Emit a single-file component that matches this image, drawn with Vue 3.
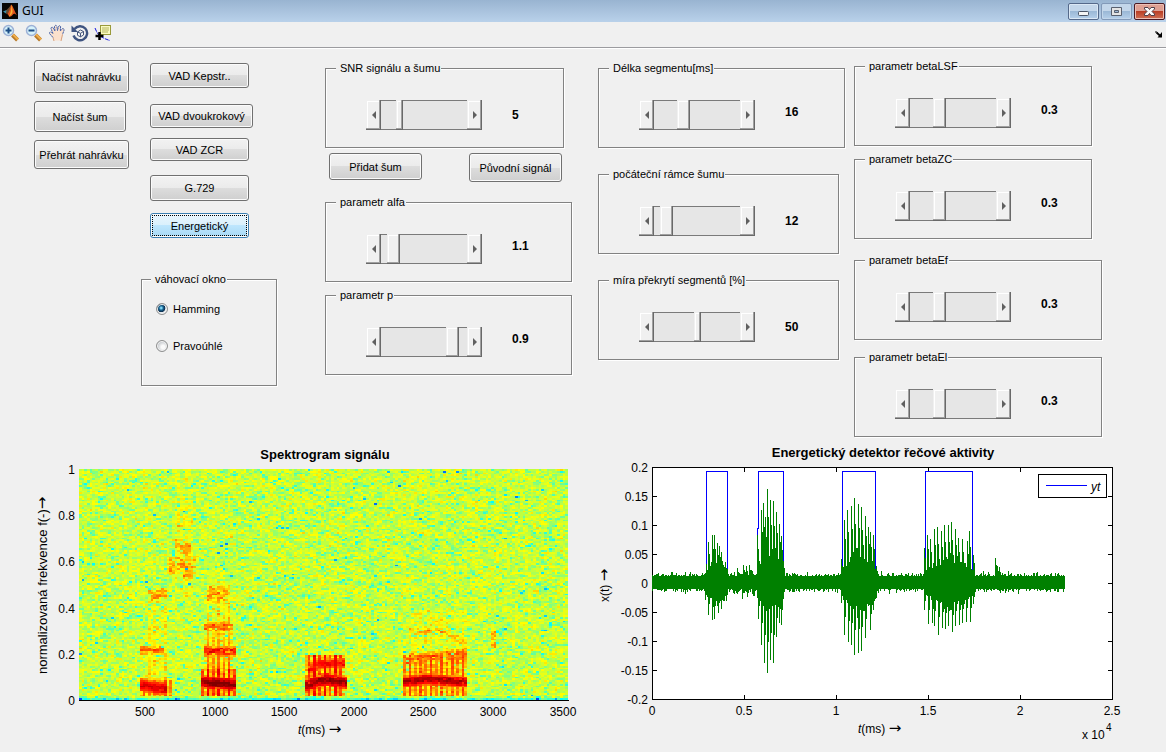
<script setup>
import { ref } from 'vue'

const loadButtons = ['Načíst nahrávku', 'Načíst šum', 'Přehrát nahrávku']
const vadButtons = ['VAD Kepstr..', 'VAD dvoukrokový', 'VAD ZCR', 'G.729', 'Energetický']
const windowKind = ref('hamming')

// pos: slider position in percent, thumb: thumb width in pixels
const columns = ref([
  {
    key: 'signal',
    panels: [
      { id: 'snr', label: 'SNR signálu a šumu', value: '5', pos: 19, thumb: 7, low: true, narrow: true, buttons: ['Přidat šum', 'Původní signál'] },
      { id: 'alfa', label: 'parametr alfa', value: '1.1', pos: 8, thumb: 13 },
      { id: 'p', label: 'parametr p', value: '0.9', pos: 89, thumb: 13 }
    ]
  },
  {
    key: 'segment',
    panels: [
      { id: 'len', label: 'Délka segmentu[ms]', value: '16', pos: 31, thumb: 13 },
      { id: 'frames', label: 'počáteční rámce šumu', value: '12', pos: 8, thumb: 13, low: true, narrow: true },
      { id: 'overlap', label: 'míra překrytí segmentů [%]', value: '50', pos: 50, thumb: 7, low: true, narrow: true }
    ]
  },
  {
    key: 'beta',
    panels: [
      { id: 'lsf', label: 'parametr betaLSF', value: '0.3', pos: 31, thumb: 13, narrow: true },
      { id: 'zc', label: 'parametr betaZC', value: '0.3', pos: 31, thumb: 13, narrow: true },
      { id: 'ef', label: 'parametr betaEf', value: '0.3', pos: 31, thumb: 13 },
      { id: 'el', label: 'parametr betaEl', value: '0.3', pos: 31, thumb: 13 }
    ]
  }
])

function makeRandom(seed) {
  let s = seed
  return () => {
    s = (s + 0x6d2b79f5) | 0
    let t = Math.imul(s ^ (s >>> 15), 1 | s)
    t = (t + Math.imul(t ^ (t >>> 7), 61 | t)) ^ t
    return ((t ^ (t >>> 14)) >>> 0) / 4294967296
  }
}

// ---- spectrogram ----
const COLS = 184
const ROWS = 128
const SX = 79
const SY = 469
const SW = 489
const SH = 231

// horizontal bands: x range, y at both ends, half height, peak level
const bands = [
  [140, 168, 685, 689, 8, 0.92], [140, 164, 650, 650, 5, 0.74], [148, 167, 597, 593, 7, 0.7], [148, 160, 627, 627, 3, 0.67],
  [168, 196, 567, 564, 9, 0.69], [174, 190, 545, 549, 7, 0.71], [182, 192, 575, 574, 7, 0.71], [178, 192, 520, 520, 7, 0.65],
  [202, 237, 682, 685, 8, 1.0], [204, 236, 651, 651, 6, 0.85], [205, 234, 627, 627, 5, 0.76], [207, 228, 595, 595, 9, 0.7],
  [305, 326, 686, 679, 8, 0.97], [326, 347, 679, 683, 8, 0.98], [307, 320, 671, 664, 7, 0.87], [320, 345, 664, 663, 6, 0.87],
  [403, 426, 682, 679, 7, 0.95], [426, 467, 679, 682, 7, 0.95], [403, 430, 660, 657, 6, 0.76], [430, 467, 657, 654, 6, 0.76],
  [408, 450, 631, 633, 4, 0.68], [450, 467, 636, 642, 5, 0.68], [491, 495, 640, 641, 10, 0.71]
]
// voiced blocks with pitch striping: x range, y range, lift
const blocks = [
  [140, 172, 680, 696, 0.18], [148, 167, 606, 680, 0.07],
  [202, 237, 670, 697, 0.24], [204, 234, 630, 670, 0.17], [207, 230, 580, 630, 0.09],
  [305, 346, 655, 696, 0.24], [403, 468, 655, 696, 0.18], [412, 466, 610, 655, 0.05],
  [176, 194, 470, 600, 0.025]
]

function jet(v) {
  const c = (d) => Math.round(255 * Math.max(0, Math.min(1, 1.5 - Math.abs(4 * v - d))))
  return `rgb(${c(3)},${c(2)},${c(1)})`
}

function buildSpectrogram() {
  const rnd = makeRandom(4711)
  const levels = new Map()
  for (let j = 0; j < ROWS; j++) {
    const y = SY + ((j + 0.5) * SH) / ROWS
    let prev = -0.5
    for (let i = 0; i < COLS; i++) {
      const x = SX + ((i + 0.5) * SW) / COLS
      const raw = Math.log(-Math.log(1 - rnd() * 0.9999) + 0.0001)
      const n = raw * 0.85 + prev * 0.15
      prev = raw
      let v = 0.588 + 0.047 * n
      const stripe = [1, 0.3, 0.75, 0.2][i % 4]
      let lift = 0
      for (const [x0, x1, y0, y1, amount] of blocks) {
        if (x < x0 || x > x1 || y < y0 || y > y1) continue
        const fade = y0 < 650 ? 0.4 + (0.6 * (y - y0)) / (y1 - y0) : 1
        lift = Math.max(lift, amount * stripe * fade + amount * 0.2)
      }
      if (lift > 0.1) v = v * 0.5 + 0.3 + lift
      else v += lift
      for (const [x0, x1, ya, yb, half, peak] of bands) {
        if (x < x0 || x > x1) continue
        const yc = ya + ((yb - ya) * (x - x0)) / (x1 - x0)
        const d = Math.abs(y - yc) / half
        if (d < 1) v = Math.max(v, peak - (peak - 0.62) * d * d + (peak > 0.85 ? 0.025 : 0.055) * (n + 0.4))
      }
      if (j === ROWS - 1) v = 0.46 + 0.06 * n
      if (j === ROWS - 2) v -= 0.02
      const q = Math.round(Math.max(0.06, Math.min(0.99, v)) * 48)
      const px0 = SX + Math.round((i * SW) / COLS)
      const px1 = SX + Math.round(((i + 1) * SW) / COLS)
      const py0 = SY + Math.round((j * SH) / ROWS)
      const py1 = SY + Math.round(((j + 1) * SH) / ROWS)
      levels.set(q, (levels.get(q) || '') + `M${px0} ${py0}H${px1}V${py1}H${px0}z`)
    }
  }
  return [...levels].map(([q, d]) => ({ q, d, fill: jet(q / 48) }))
}
const spectrogram = buildSpectrogram()
const specY = ['1', '0.8', '0.6', '0.4', '0.2', '0'].map((t, i) => ({ t, y: Math.round(474 + i * 46.2) }))
const specX = ['500', '1000', '1500', '2000', '2500', '3000', '3500'].map((t, i) => ({ t, x: Math.round(145 + i * 69.6) }))

// ---- waveform: [x, amplitude] peaks above and below the zero line ----
const ZERO = 583
const peaksUp = [
  [706, 19], [708, 41], [712, 48], [714, 48], [717, 40], [719, 37], [721, 31], [725, 21],
  [757, 48], [761, 73], [763, 80], [765, 66], [767, 94], [770, 83], [773, 82], [776, 71], [779, 59], [781, 47], [783, 22],
  [841, 24], [844, 63], [847, 73], [851, 77], [854, 85], [858, 79], [861, 76], [865, 67], [868, 56], [870, 51], [873, 48], [876, 17],
  [924, 35], [927, 48], [930, 44], [934, 54], [937, 56], [941, 52], [944, 58], [948, 58], [951, 61], [955, 54], [958, 45], [962, 44], [967, 42], [969, 52], [973, 28],
  [995, 25], [997, 17], [999, 16], [743, 18], [746, 17], [749, 18]
]
const peaksDown = [
  [705, 17], [708, 32], [712, 37], [714, 36], [718, 30], [721, 26], [726, 18],
  [758, 36], [761, 62], [764, 80], [767, 90], [770, 77], [773, 80], [776, 54], [779, 40], [781, 42], [783, 14],
  [841, 20], [844, 52], [848, 59], [851, 62], [854, 72], [858, 70], [861, 68], [865, 55], [870, 47], [873, 27], [876, 12],
  [924, 27], [928, 41], [932, 40], [934, 43], [938, 52], [942, 45], [945, 46], [948, 43], [952, 49], [955, 43], [959, 42], [962, 40], [966, 39], [970, 39], [973, 21],
  [742, 16], [747, 14]
]
const bursts = [
  [706, 727, 18], [757, 783, 34], [842, 876, 34], [925, 973, 24]
]
function buildWave() {
  const rnd = makeRandom(99)
  let d = ''
  for (let x = 652; x <= 1064; x++) {
    let up = 7 + Math.floor(rnd() * rnd() * 6)
    let down = 6 + Math.floor(rnd() * rnd() * 6)
    if (x > 733 && x < 756) {
      up += Math.floor(rnd() * 5)
      down += Math.floor(rnd() * 5)
    }
    for (const [a, b, h] of bursts) {
      if (x >= a && x <= b) {
        const k = Math.sin((Math.PI * (x - a + 3)) / (b - a + 6))
        up = Math.max(up, 9 + h * k * (0.4 + 0.5 * rnd()))
        down = Math.max(down, 9 + h * k * (0.4 + 0.4 * rnd()))
      }
    }
    for (const [px, h] of peaksUp) {
      if (x === px) up = Math.max(up, h)
      if (x === px + 1) up = Math.max(up, h * 0.7)
    }
    for (const [px, h] of peaksDown) {
      if (x === px) down = Math.max(down, h)
      if (x === px + 1) down = Math.max(down, h * 0.65)
    }
    d += `M${x + 0.5} ${ZERO - Math.round(up)}V${ZERO + Math.round(down)}`
  }
  return d
}
const wave = buildWave()
const waveY = ['0.2', '0.15', '0.1', '0.05', '0', '-0.05', '-0.1', '-0.15', '-0.2'].map((t, i) => ({ t, y: 467 + i * 29 }))
const waveX = ['0', '0.5', '1', '1.5', '2', '2.5'].map((t, i) => ({ t, x: 652 + i * 92 }))
</script>

<template>
  <div class="window">
    <header class="titlebar">
      <svg class="logo" viewBox="0 0 16 16" aria-hidden="true">
        <rect width="16" height="16" fill="#050505" />
        <path d="M1 8.5L4.5 7 6 8 4 10.500z" fill="#3f8fa8" />
        <path d="M4.500 7L7 4.500 9.300 1.500 7.500 8.500 5 11 4 10.500z" fill="#6b4a30" />
        <path d="M9.300 1.500C10.500 2 12 7 15 12.500 13 10.500 12 10 10.500 12 9.500 13.500 8 14 7 13.500 6.500 12 6 11 5 11 7 10 8 5 9.300 1.500z" fill="#e2571e" />
        <path d="M9.300 2C9.500 6 9 10 7 13.500 8.500 13 10 11 10.500 9 10.400 6 10 3.500 9.300 2z" fill="#f7b733" />
      </svg>
      <h1>GUI</h1>
      <div class="controls">
        <button type="button" class="ctl" aria-label="Minimalizovat">
          <svg viewBox="0 0 29 15"><rect x="9.500" y="7.500" width="10" height="4" rx="1" fill="#f5f5f5" stroke="#4c5566" /></svg>
        </button>
        <button type="button" class="ctl dim" aria-label="Maximalizovat">
          <svg viewBox="0 0 29 15"><path d="M9.500 3.500h10v8h-10z" fill="#e4e4e4" stroke="#59606e" /><path d="M12.500 6.500h4v2h-4z" fill="#9db7d4" stroke="#59606e" /></svg>
        </button>
        <button type="button" class="ctl close" aria-label="Zavřít">
          <svg viewBox="0 0 29 15"><path d="M9.500 3.500h3.500l1.500 2 1.500-2h3.500v1.500L17 7.500l2.500 2.500v1.500H16l-1.500-2-1.500 2H9.500V10L12 7.500 9.500 5z" fill="#fafafa" stroke="#4f3f49" /></svg>
        </button>
      </div>
    </header>

    <nav class="toolbar" aria-label="Nástroje">
      <button type="button" class="tool" aria-label="Přiblížit">
        <svg viewBox="0 0 18 18"><path d="M10.500 11l5 5" stroke="#b87a2a" stroke-width="4" /><path d="M11 10.500l5 5" stroke="#f0ae4a" stroke-width="2" /><circle cx="6.500" cy="6.500" r="5" fill="#d6f2fb" stroke="#9db1d6" stroke-width="1.500" /><path d="M6.500 3.500v6M3.500 6.500h6" stroke="#1d4d86" stroke-width="2" /></svg>
      </button>
      <button type="button" class="tool" aria-label="Oddálit">
        <svg viewBox="0 0 18 18"><path d="M10.500 11l5 5" stroke="#b87a2a" stroke-width="4" /><path d="M11 10.500l5 5" stroke="#f0ae4a" stroke-width="2" /><circle cx="6.500" cy="6.500" r="5" fill="#d6f2fb" stroke="#9db1d6" stroke-width="1.500" /><path d="M3.500 6.500h6" stroke="#1d4d86" stroke-width="2" /></svg>
      </button>
      <button type="button" class="tool" aria-label="Posunout">
        <svg viewBox="0 0 18 18"><path d="M6 16.500L5 13.500 1.500 9.500C1 8 3 7.500 4 8.800L5 9.500 3 4.500C3 3 4.700 2.700 5.200 4L7 7 6.500 2.500C6.700 1 8.500 1 8.900 2.500L9.500 6.500 10.500 2.500C11 1.200 12.700 1.600 12.600 3L12.300 7 14 5C15 4 16.500 5 16 6.300L14.500 10.500 14 13.500 13 16.500z" fill="#fbe0cc" /><path d="M5 13.500L1.500 9.500C1 8 3 7.500 4 8.800L5 9.500 3 4.500C3 3 4.700 2.700 5.200 4L7 7 6.500 2.500C6.700 1 8.500 1 8.900 2.500L9.500 6.500 10.500 2.500C11 1.200 12.700 1.600 12.600 3L12.300 7 14 5C15 4 16.500 5 16 6.300L14.500 10.500" fill="none" stroke="#3d5ba6" stroke-dasharray="2 0.5" /><path d="M5 13.500l1 3.500M14.500 10.500L13 17" stroke="#d8a07c" /></svg>
      </button>
      <button type="button" class="tool" aria-label="Otočit 3D">
        <svg viewBox="0 0 18 18"><path d="M3.500 5A7 7 0 1 1 2.500 11.500" fill="none" stroke="#3f5480" stroke-width="2.400" /><path d="M0.500 1.500v6.500h6.500z" fill="#3f5480" /><path d="M6.500 8l3-2 3 1.500v3.500l-3 1.800-3-1.500zM6.500 8l3 1.300 3-1.800M9.500 9.300v3.500" fill="#f7f7f7" stroke="#44557a" /></svg>
      </button>
      <button type="button" class="tool" aria-label="Datový kurzor">
        <svg viewBox="0 0 18 18"><path d="M1 4C2 6.500 3 9 5 11s7 4.500 11 5.500" fill="none" stroke="#1515e0" stroke-dasharray="4 1" /><rect x="6.500" y="1.500" width="10" height="9" fill="#fafac0" stroke="#9a9a3a" /><path d="M8 4h7M8 6h7M8 8h6" stroke="#b5b560" /><path d="M5.500 8v8M1.500 12h8" stroke="#000" stroke-width="2.500" /></svg>
      </button>
      <button type="button" class="dock" aria-label="Ukotvit">
        <svg viewBox="0 0 8 7"><path d="M0 1h2M2 2h1" stroke="#000" /><path d="M1.500 1.500L6 5.500" stroke="#000" stroke-width="1.800" /><path d="M7 1v5.500H2.500z" fill="#000" /></svg>
      </button>
    </nav>

    <main>
      <section class="board">
        <div class="col loaders">
          <button v-for="b in loadButtons" :key="b" type="button" class="push">{{ b }}</button>
        </div>

        <div class="col detectors">
          <div class="vads">
            <button v-for="b in vadButtons" :key="b" type="button" class="push" :class="{ focused: b === 'Energetický' }">{{ b }}</button>
          </div>
          <fieldset class="panel choices">
            <legend>váhovací okno</legend>
            <label><input v-model="windowKind" type="radio" name="okno" value="hamming" />Hamming</label>
            <label><input v-model="windowKind" type="radio" name="okno" value="rect" />Pravoúhlé</label>
          </fieldset>
        </div>

        <div v-for="c in columns" :key="c.key" class="col" :class="c.key">
          <template v-for="p in c.panels" :key="p.id">
            <fieldset class="panel" :class="{ narrow: p.narrow, low: p.low }">
              <legend>{{ p.label }}</legend>
              <div class="row">
                <div class="slider">
                  <button type="button" class="step" :aria-label="p.label + ' méně'"><svg viewBox="0 0 4 8"><path d="M4 0v8L0 4z" /></svg></button>
                  <input v-model="p.pos" type="range" min="0" max="100" :aria-label="p.label" :style="{ '--thumb': p.thumb + 'px' }" />
                  <button type="button" class="step" :aria-label="p.label + ' více'"><svg viewBox="0 0 4 8"><path d="M0 0v8l4-4z" /></svg></button>
                </div>
                <output>{{ p.value }}</output>
              </div>
            </fieldset>
            <div v-if="p.buttons" class="actions">
              <button v-for="b in p.buttons" :key="b" type="button" class="push">{{ b }}</button>
            </div>
          </template>
        </div>
      </section>

      <section class="plots">
        <svg viewBox="0 440 583 312" role="img" aria-label="Spektrogram signálu">
          <text class="title" x="325" y="459">Spektrogram signálu</text>
          <g shape-rendering="crispEdges">
            <path v-for="l in spectrogram" :key="l.q" :d="l.d" :fill="l.fill" />
            <path d="M79 700.500H569" stroke="#000" />
          </g>
          <text v-for="t in specY" :key="t.t" class="end" x="75" :y="t.y">{{ t.t }}</text>
          <text v-for="t in specX" :key="t.t" class="mid" :x="t.x" y="716">{{ t.t }}</text>
          <text x="298" y="734"><tspan class="it">t</tspan>(ms) <tspan class="arrow">→</tspan></text>
          <text class="ylab" transform="translate(47 674) rotate(-90)">normalizovaná frekvence f(-)<tspan class="arrow">→</tspan></text>
        </svg>

        <svg viewBox="583 440 583 312" role="img" aria-label="Energetický detektor řečové aktivity">
          <text class="title" x="883" y="457">Energetický detektor řečové aktivity</text>
          <g shape-rendering="crispEdges" fill="none">
            <rect x="652.500" y="467.500" width="460" height="232" fill="#fff" stroke="#000" />
            <path v-for="t in waveY" :key="t.t" :d="`M652 ${t.y + 0.5}h5M1113 ${t.y + 0.5}h-5`" stroke="#000" />
            <path v-for="t in waveX" :key="t.t" :d="`M${t.x + 0.5} 700v-5M${t.x + 0.5} 467v5`" stroke="#000" />
            <path d="M706.500 583V471.500H727.500V583M757.500 583V528.500H758.500V471.500H783.500V583M842.500 583V471.500H875.500V583M925.500 583V471.500H972.500V583" stroke="#00f" />
            <path :d="wave" stroke="#008000" />
            <rect x="1038.500" y="474.500" width="68" height="23" fill="#fff" stroke="#000" />
            <path d="M1046 485.500h41" stroke="#00f" />
          </g>
          <text class="it" x="1091" y="491">yt</text>
          <text v-for="t in waveY" :key="t.t" class="end" x="648" :y="t.y + 5">{{ t.t }}</text>
          <text v-for="t in waveX" :key="t.t" class="mid" :x="t.x" y="715">{{ t.t }}</text>
          <text x="858" y="733"><tspan class="it">t</tspan>(ms) <tspan class="arrow">→</tspan></text>
          <text x="1082" y="739">x 10</text>
          <text class="sup" x="1106" y="731">4</text>
          <text transform="translate(609 602) rotate(-90)">x(t) <tspan class="arrow">→</tspan></text>
        </svg>
      </section>
    </main>
  </div>
</template>

<style>
body {
  margin: 0;
  background: #f0f0f0;
}
</style>

<style scoped>
.window {
  background: #f0f0f0;
  color: #000;
  font: 11px/14px "Liberation Sans", Arial, sans-serif;
}
button {
  font: inherit;
  color: inherit;
  padding: 0;
  margin: 0;
}
svg {
  display: block;
}
.titlebar {
  display: flex;
  align-items: center;
  gap: 4px;
  height: 22px;
  padding: 0 1px 0 2px;
  box-sizing: border-box;
  background: linear-gradient(#99b4d1, #b9d1ea);
}
.logo {
  width: 16px;
  height: 16px;
}
h1 {
  margin: 0;
  font: 12px/16px "Noto Sans", "Open Sans", sans-serif;
}
.controls {
  display: flex;
  gap: 2px;
  margin-left: auto;
}
.ctl {
  width: 31px;
  height: 17px;
  border: 1px solid #55698a;
  border-radius: 2px;
  background: linear-gradient(#c3d6ea 45%, #9bb8d6 50%, #b6d0ea);
  box-shadow: inset 0 0 0 1px #dbe8f5;
}
.ctl svg {
  width: 29px;
  height: 15px;
}
.ctl.dim {
  border-color: #8299b8;
  box-shadow: inset 0 0 0 1px #c2d6ea;
}
.ctl.close {
  border-color: #4b1a24;
  background: linear-gradient(#dfa093 45%, #bb3f26 50%, #cf7157);
  box-shadow: inset 0 0 0 1px #ecc0b6;
}
.toolbar {
  display: flex;
  align-items: flex-start;
  gap: 5px;
  height: 25px;
  padding: 0 3px 0 2px;
  border-bottom: 1px solid #9b9b9f;
  box-shadow: 0 1px #fff;
}
.tool,
.dock {
  border: 0;
  background: none;
}
.tool {
  margin-top: 2px;
}
.tool svg {
  width: 18px;
  height: 18px;
}
.dock {
  margin: 9px 0 0 auto;
}
.dock svg {
  width: 8px;
  height: 7px;
}

.board {
  display: grid;
  grid-template-columns: 141fr 184fr 273fr 256fr 312fr;
  padding: 13px 0 3px;
}
.col {
  display: flex;
  flex-direction: column;
  min-width: 0;
}
.push {
  box-sizing: border-box;
  border: 1px solid #707070;
  border-radius: 3px;
  background: linear-gradient(#f2f2f2, #ebebeb 50%, #dddddd 50%, #cfcfcf);
  box-shadow: inset 0 0 0 1px #fbfbfb;
  white-space: nowrap;
}
.push.focused {
  border-color: #3c7fb1;
  background: linear-gradient(#eaf6fd, #d9f0fc 50%, #bee6fd 50%, #a7d9f5);
  outline: 1px dotted #000;
  outline-offset: -3px;
}
.loaders {
  gap: 8px;
  align-items: flex-start;
  padding-left: 34px;
  margin-top: -1px;
}
.loaders .push {
  width: 95px;
  height: 29px;
}
.loaders .push:nth-child(1) {
  height: 33px;
}
.loaders .push:nth-child(2) {
  width: 92px;
  height: 31px;
}
.vads {
  display: flex;
  flex-direction: column;
  align-items: flex-start;
  gap: 10px;
  padding: 2px 0 34px 9px;
}
.vads .push {
  width: 99px;
  height: 25px;
}
.vads .push:nth-child(2) {
  width: 103px;
  height: 24px;
  margin-top: 6px;
}
.vads .push:nth-child(3) {
  height: 23px;
}
.vads .push:nth-child(4) {
  height: 26px;
  margin-top: 4px;
}
.vads .push:nth-child(5) {
  margin-top: 2px;
}
.choices {
  width: 136px;
}
.panel {
  box-sizing: border-box;
  margin: 0;
  min-width: 0;
  padding: 25px 0 17px 40px;
  border: 1px solid #828282;
  box-shadow: 1px 1px #fff, inset 1px 1px #fff;
}
legend {
  margin-left: -30px;
  padding: 0 1px 0 4px;
  background: #f0f0f0;
}
.choices {
  display: flex;
  flex-direction: column;
  gap: 23px;
  padding: 16px 0 32px 14px;
}
.choices legend {
  margin-left: -5px;
}
.choices label {
  display: flex;
  align-items: center;
  gap: 5px;
}
.choices input {
  appearance: none;
  width: 12px;
  height: 12px;
  margin: 0;
  border: 1px solid #8e8f8f;
  border-radius: 50%;
  background: radial-gradient(circle at 60% 60%, #fafafa 20%, #c4c8cc 65%);
  box-shadow: inset 0 0 0 1px #f4f4f4;
}
.choices input:checked {
  background: radial-gradient(circle at 42% 40%, #7fd6f5 8%, #17628f 26%, #0c2c4c 46%, #e4e8ea 54%);
}

.signal {
  padding-right: 26px;
}
.signal .panel.narrow {
  margin-right: 8px;
}
.signal .panel:last-child {
  margin-top: 6px;
}
.segment {
  gap: 19px;
  padding-right: 9px;
}
.segment .narrow {
  margin-right: 6px;
}
.beta {
  padding-right: 64px;
  margin-top: -2px;
  gap: 6px;
}
.beta .narrow {
  margin-right: 10px;
}
.beta .panel:nth-child(3) {
  margin-top: 8px;
}
.beta .panel:nth-child(4) {
  margin-top: 4px;
}
.actions {
  display: flex;
  justify-content: space-between;
  align-items: flex-start;
  margin: 5px 10px 13px 4px;
}
.actions .push {
  width: 93px;
  height: 29px;
}
.actions .push:first-child {
  height: 27px;
}
.row {
  display: flex;
  align-items: flex-start;
  gap: 30px;
}
output {
  font: bold 12px/24px "Liberation Sans", Arial, sans-serif;
}
.low output {
  line-height: 30px;
}
.slider {
  display: flex;
  height: 30px;
}
.step {
  display: flex;
  align-items: center;
  justify-content: center;
  width: 15px;
  border: 0;
  background: #f0f0f0;
  box-shadow: inset -1px -1px #696969, inset -2px -2px #a0a0a0, inset 1px 1px #f0f0f0, inset 2px 2px #fff;
}
.step svg {
  width: 4px;
  height: 8px;
  fill: #606060;
}
.slider input {
  appearance: none;
  width: 86px;
  height: 30px;
  margin: 0;
  background: #e6e6e6;
  box-shadow: inset 0 1px #7a7a7a, inset 0 -1px #7a7a7a;
}
.slider input::-webkit-slider-thumb {
  appearance: none;
  width: var(--thumb);
  height: 30px;
  background: #f0f0f0;
  box-shadow: inset -1px -1px #696969, inset -2px -2px #a0a0a0, inset 1px 1px #f0f0f0, inset 2px 2px #fff;
}

.plots {
  display: grid;
  grid-template-columns: 1fr 1fr;
}
.plots > svg {
  width: 100%;
}
.plots text {
  font: 12px "Liberation Sans", Arial, sans-serif;
}
.plots .title {
  font-weight: bold;
  font-size: 13px;
  text-anchor: middle;
}
.plots .end {
  text-anchor: end;
}
.plots .mid {
  text-anchor: middle;
}
.plots .it {
  font-style: italic;
}
.plots .ylab {
  font-size: 13px;
}
.plots .arrow {
  font: 15px "DejaVu Sans", sans-serif;
}
.plots .sup {
  font-size: 10px;
}
</style>
